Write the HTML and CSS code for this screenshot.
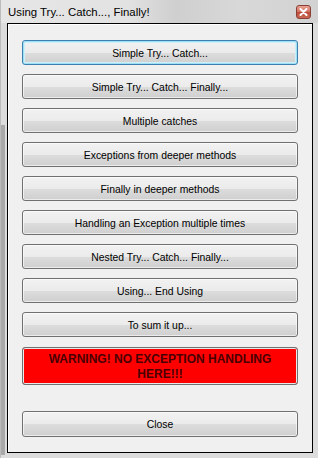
FILE: index.html
```html
<!DOCTYPE html>
<html>
<head>
<meta charset="utf-8">
<link rel="stylesheet" href="styles.css">
</head>
<body>
<div class="window">
  <div class="titlebar">
    <span class="title">Using Try... Catch..., Finally!</span>
    <span class="close-x"><svg width="9" height="8" viewBox="0 0 9 8"><path d="M1.5 1 L7.5 7 M7.5 1 L1.5 7" stroke="#fff" stroke-width="2" stroke-linecap="round"/></svg></span>
  </div>
  <div class="frame">
    <div class="client">
      <div class="btn focused">Simple Try... Catch...</div>
      <div class="btn">Simple Try... Catch... Finally...</div>
      <div class="btn">Multiple catches</div>
      <div class="btn">Exceptions from deeper methods</div>
      <div class="btn">Finally in deeper methods</div>
      <div class="btn">Handling an Exception multiple times</div>
      <div class="btn">Nested Try... Catch... Finally...</div>
      <div class="btn">Using... End Using</div>
      <div class="btn">To sum it up...</div>
      <div class="btn warning">WARNING! NO EXCEPTION HANDLING<br>HERE!!!</div>
      <div class="btn closebtn">Close</div>
    </div>
  </div>
</div>
</body>
</html>
```
FILE: styles.css
```css
html, body {
  margin: 0;
  padding: 0;
  background: #ffffff;
}
body {
  font-family: "Liberation Sans", Arial, sans-serif;
}
.window {
  width: 318px;
  height: 458px;
  display: flex;
  flex-direction: column;
  background: #d9d9d9;
  box-sizing: border-box;
  border-left: 1px solid #bcbcbc;
}
.titlebar {
  height: 23px;
  flex: 0 0 23px;
  display: flex;
  align-items: center;
  justify-content: space-between;
  padding: 0 7px 0 7px;
  background: linear-gradient(to right, #e6e6e6 0%, #e2e2e2 40%, #cfcfcf 55%, #d8d8d8 75%, #d2d2d2 100%);
}
.title {
  font-size: 11.4px;
  color: #000;
  padding-top: 1px;
}
.close-x {
  width: 15px;
  height: 14px;
  box-sizing: border-box;
  border: 1px solid #8a3f35;
  border-radius: 3px;
  background: linear-gradient(to bottom, #e9a295 0%, #d0705f 50%, #be4a38 51%, #c86a55 100%);
  display: flex;
  align-items: center;
  justify-content: center;
  margin-top: 1px;
}
.frame {
  flex: 1;
  display: flex;
  padding: 0 5px 5px 6px;
  background-color: #dcdcdc;
  background-image: linear-gradient(to right, transparent 0px, #a9a9a9 0px, #a9a9a9 4px, transparent 4px);
  background-size: 5px 330px;
  background-position: 0 102px;
  background-repeat: no-repeat;
}
.client {
  flex: 1;
  border: 1px solid #000;
  box-shadow: inset 1px 1px 0 #ffffff;
  background: #f0f0f0;
  padding: 16px 14px 15px 14px;
  display: flex;
  flex-direction: column;
  gap: 9px;
}
.btn {
  height: 25px;
  box-sizing: border-box;
  border: 1px solid #707070;
  border-radius: 3px;
  background: linear-gradient(to bottom, #f2f2f2 0%, #ebebeb 50%, #dddddd 51%, #cfcfcf 100%);
  box-shadow: inset 0 0 0 1px rgba(255,255,255,0.6);
  display: flex;
  align-items: center;
  justify-content: center;
  text-align: center;
  font-size: 10.4px;
  color: #000;
  padding-top: 1px;
}
.btn.focused {
  border-color: #3c7fb1;
  box-shadow: inset 0 0 0 1px #9fe0f5, inset 0 0 0 2px #cdeffa;
}
.btn.warning {
  height: 38px;
  margin-top: 1px;
  background: #ff0000;
  box-shadow: inset 0 0 0 1px #e8e8e8;
  font-weight: bold;
  font-size: 12px;
  line-height: 15px;
  color: #4a0000;
}
.btn.closebtn {
  margin-top: 17px;
  height: 26px;
}
```
